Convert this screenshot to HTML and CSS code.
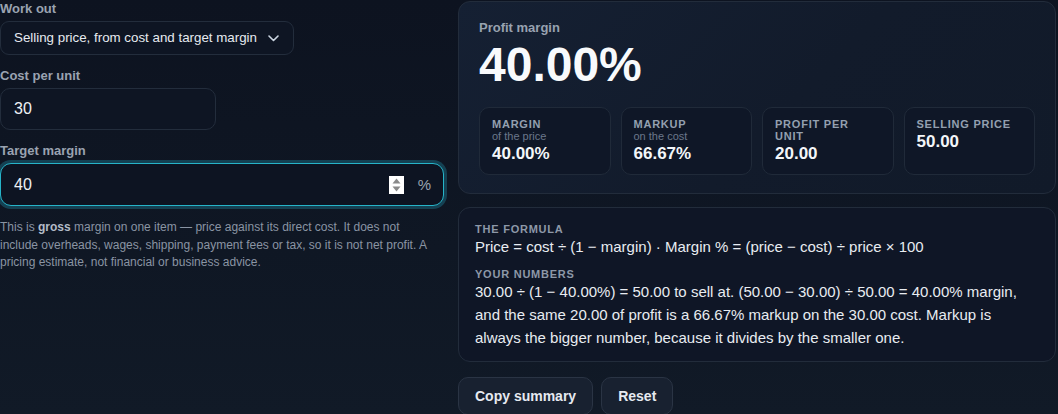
FILE: index.html
```html
<!DOCTYPE html>
<html lang="en">
<head>
<meta charset="utf-8">
<title>Profit margin calculator</title>
<link rel="stylesheet" href="styles.css">
</head>
<body>
<main class="calc">
  <section class="inputs">
    <div class="field">
      <label class="label" for="mode">Work out</label>
      <div class="select-wrap">
        <select id="mode" class="select">
          <option selected>Selling price, from cost and target margin</option>
          <option>Margin, from cost and price</option>
          <option>Cost, from price and margin</option>
        </select>
        <svg class="chevron" width="11" height="7" viewBox="0 0 11 7" aria-hidden="true"><polyline points="1,1 5.5,5.5 10,1" fill="none" stroke="#cbd5e1" stroke-width="1.6" stroke-linecap="round" stroke-linejoin="round"/></svg>
      </div>
    </div>
    <div class="field">
      <label class="label" for="cost">Cost per unit</label>
      <input id="cost" class="input input-cost" type="text" inputmode="decimal" value="30">
    </div>
    <div class="field">
      <label class="label" for="margin">Target margin</label>
      <div class="affix is-focused">
        <input id="margin" class="affix-input" type="text" inputmode="decimal" value="40">
        <span class="spinner" aria-hidden="true">
          <svg width="15" height="18" viewBox="0 0 15 18"><rect width="15" height="18" fill="#ffffff"/><polygon points="7.5,2.5 3.5,7.5 11.5,7.5" fill="#8a8a8a"/><polygon points="3.5,10.5 11.5,10.5 7.5,15.5" fill="#8a8a8a"/></svg>
        </span>
        <span class="suffix">%</span>
      </div>
    </div>
    <p class="note">This is <strong>gross</strong> margin on one item — price against its direct cost. It does not include overheads, wages, shipping, payment fees or tax, so it is not net profit. A pricing estimate, not financial or business advice.</p>
  </section>

  <section class="results">
    <div class="card hero">
      <div class="hero-label">Profit margin</div>
      <div class="hero-value">40.00%</div>
      <div class="stats">
        <div class="stat">
          <div class="stat-label">Margin</div>
          <div class="stat-sub">of the price</div>
          <div class="stat-value">40.00%</div>
        </div>
        <div class="stat">
          <div class="stat-label">Markup</div>
          <div class="stat-sub">on the cost</div>
          <div class="stat-value">66.67%</div>
        </div>
        <div class="stat">
          <div class="stat-label">Profit per unit</div>
          <div class="stat-value">20.00</div>
        </div>
        <div class="stat">
          <div class="stat-label">Selling price</div>
          <div class="stat-value">50.00</div>
        </div>
      </div>
    </div>

    <div class="card explain">
      <div class="explain-head">The formula</div>
      <div class="explain-text explain-formula">Price = cost ÷ (1 − margin) · Margin % = (price − cost) ÷ price × 100</div>
      <div class="explain-head explain-head-gap">Your numbers</div>
      <p class="explain-text explain-para">30.00 ÷ (1 − 40.00%) = 50.00 to sell at. (50.00 − 30.00) ÷ 50.00 = 40.00% margin, and the same 20.00 of profit is a 66.67% markup on the 30.00 cost. Markup is always the bigger number, because it divides by the smaller one.</p>
    </div>

    <div class="actions">
      <button class="btn" type="button">Copy summary</button>
      <button class="btn" type="button">Reset</button>
    </div>
  </section>
</main>
</body>
</html>
```

FILE: styles.css
```css
* { box-sizing: border-box; }

html, body {
  margin: 0;
  padding: 0;
}

body {
  min-height: 414px;
  background: linear-gradient(180deg, #0d1320 0%, #0f1724 60%, #111a27 100%);
  color: #e5e9f0;
  font-family: "Liberation Sans", Arial, sans-serif;
  overflow: hidden;
}

.calc {
  display: grid;
  grid-template-columns: 444px 598px;
  column-gap: 14px;
  align-items: start;
}

/* ---------- left column ---------- */
.inputs {
  display: flex;
  flex-direction: column;
  gap: 12px;
}

.field {
  display: flex;
  flex-direction: column;
  align-items: flex-start;
}

.label {
  display: block;
  font-size: 13px;
  line-height: 17px;
  font-weight: 700;
  color: #9aa3b1;
  margin-bottom: 4px;
}

.select-wrap {
  position: relative;
  display: inline-block;
}

.select {
  appearance: none;
  -webkit-appearance: none;
  font-family: inherit;
  font-size: 13.333px;
  line-height: 16px;
  color: #e6eaf0;
  background: #0e1523;
  border: 1px solid #232d3c;
  border-radius: 9px;
  padding: 8px 36px 8px 13px;
  height: 34px;
  margin: 0;
}

.chevron {
  position: absolute;
  right: 15px;
  top: 14px;
  pointer-events: none;
}

.input {
  font-family: inherit;
  font-size: 16px;
  color: #eef1f5;
  background: #0e1523;
  border: 1px solid #232d3c;
  border-radius: 10px;
  padding: 0 13px;
  height: 42px;
  margin: 0;
  outline: none;
}

.input-cost { width: 216px; }

.affix {
  display: flex;
  align-items: center;
  width: 100%;
  height: 43px;
  background: #0d1422;
  border: 1px solid #232d3c;
  border-radius: 11px;
  padding: 0 12px 0 13px;
}

.affix.is-focused {
  border-color: #26b4c9;
  box-shadow: 0 0 0 3px rgba(34, 160, 186, 0.32);
}

.affix-input {
  flex: 1;
  min-width: 0;
  font-family: inherit;
  font-size: 16px;
  color: #eef1f5;
  background: transparent;
  border: 0;
  padding: 0;
  margin: 0;
  outline: none;
}

.spinner {
  display: flex;
  margin-right: 14px;
}

.suffix {
  font-size: 15px;
  color: #9aa3b1;
}

.note {
  margin: 1px 0 0;
  padding-right: 6px;
  font-size: 12px;
  line-height: 17.5px;
  color: #8a94a3;
}

.note strong {
  color: #b3bcc8;
  font-weight: 700;
}

/* ---------- right column ---------- */
.results {
  display: flex;
  flex-direction: column;
  gap: 13px;
  margin-top: 1px;
}

.card {
  border: 1px solid #222c3b;
  border-radius: 12px;
}

.hero {
  background: linear-gradient(135deg, #152033 0%, #121b2b 55%, #111a29 100%);
  padding: 18px 20px 18px;
}

.hero-label {
  font-size: 13px;
  line-height: 16px;
  font-weight: 700;
  color: #98a2b0;
}

.hero-value {
  margin-top: 5px;
  font-size: 48px;
  line-height: 48px;
  font-weight: 700;
  color: #f8fafc;
}

.stats {
  margin-top: 18px;
  display: grid;
  grid-template-columns: repeat(4, 1fr);
  gap: 10px;
}

.stat {
  background: #0f1727;
  border: 1px solid #202a39;
  border-radius: 10px;
  padding: 10px 12px;
  min-height: 67px;
}

.stat-label {
  font-size: 11px;
  line-height: 12px;
  font-weight: 700;
  letter-spacing: 0.07em;
  text-transform: uppercase;
  color: #94a0b0;
}

.stat-sub {
  font-size: 11px;
  line-height: 12px;
  color: #6b788b;
}

.stat-value {
  margin-top: 2px;
  font-size: 17px;
  line-height: 20px;
  font-weight: 700;
  color: #f3f6f9;
}

.explain {
  background: #0f1626;
  padding: 15px 16px 12px;
}

.explain-head {
  font-size: 11px;
  line-height: 12px;
  font-weight: 700;
  letter-spacing: 0.07em;
  text-transform: uppercase;
  color: #8d98a8;
}

.explain-head-gap { margin-top: 10px; }

.explain-text {
  font-size: 15px;
  line-height: 22px;
  color: #e8ecf1;
}

.explain-formula { margin-top: 1px; }

.explain-para {
  margin: 0;
  line-height: 23px;
}

.actions {
  display: flex;
  gap: 8px;
  margin-top: 2px;
}

.btn {
  font-family: inherit;
  font-size: 14px;
  line-height: 16px;
  font-weight: 700;
  color: #e6eaf0;
  background: #182130;
  border: 1px solid #2a3444;
  border-radius: 10px;
  padding: 10px 16px;
  margin: 0;
  cursor: pointer;
}
```
